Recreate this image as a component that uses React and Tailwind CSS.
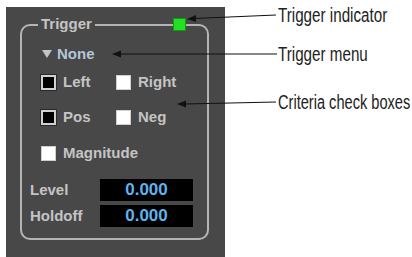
import React from 'react';

const Check = ({ label, on }) => (
    <div className="flex items-center gap-[7px]">
        {on ? (
            <span className="w-[15px] h-[15px] bg-black border-2 border-[#d0d0d0] outline outline-1 outline-[#2a2a2a]" />
        ) : (
            <span className="w-[15px] h-[15px] bg-white border border-[#cfcfcf]" />
        )}
        <span className="text-[15px] font-bold leading-[20px] text-[#c4c4c4]">{label}</span>
    </div>
);

const Field = ({ label, value }) => (
    <div className="flex items-center">
        <span className="w-[70px] text-[15px] font-bold leading-[20px] text-[#c4c4c4]">{label}</span>
        <div className="w-[93px] h-[22px] bg-black flex items-center justify-center text-[17px] font-bold text-[#5fb2ee]">
            {value}
        </div>
    </div>
);

const App = () => {
    return (
        <div className="relative w-[412px] h-[257px] bg-white flex overflow-hidden" style={{ fontFamily: '"Liberation Sans", Arial, sans-serif' }}>
            <div className="shrink-0 ml-[6px] mt-[7px] w-[219px] h-[250px] bg-[#484848] pl-[14px] pt-[17px]">
                <div className="relative w-[189px] h-[216px] border-2 border-[#b4b4b4] rounded-[10px]">
                    {/* legend and indicator sitting on the top border */}
                    <div className="absolute left-[16px] top-[-12px] px-[3px] bg-[#484848] text-[15px] font-bold leading-[20px] text-[#c4c4c4]">
                        Trigger
                    </div>
                    <div className="absolute left-[151px] top-[-8px] w-[13px] h-[13px] bg-[#22e022] border border-[#119911]" />

                    <div className="flex flex-col pl-[19px]">
                        <div className="mt-[18px] flex items-center gap-[5px] pl-[1px]">
                            <svg width="10" height="8" viewBox="0 0 10 8">
                                <polygon points="0,0 10,0 5,8" fill="#c4c4c4" />
                            </svg>
                            <span className="text-[15px] font-bold leading-[20px] text-[#b4c6d6]">None</span>
                        </div>
                        <div className="mt-[8px] flex">
                            <div className="w-[75px]"><Check label="Left" on /></div>
                            <Check label="Right" />
                        </div>
                        <div className="mt-[15px] flex">
                            <div className="w-[75px]"><Check label="Pos" on /></div>
                            <Check label="Neg" />
                        </div>
                        <div className="mt-[16px] flex">
                            <Check label="Magnitude" />
                        </div>
                    </div>
                    <div className="flex flex-col gap-[4px] pl-[8px] mt-[16px]">
                        <Field label="Level" value="0.000" />
                        <Field label="Holdoff" value="0.000" />
                    </div>
                </div>
            </div>

            <div className="ml-[53px] flex flex-col items-start text-[#222] text-[20px] leading-[20px]">
                <span className="mt-[5px] whitespace-nowrap origin-left scale-x-[0.76]">Trigger indicator</span>
                <span className="mt-[19px] whitespace-nowrap origin-left scale-x-[0.76]">Trigger menu</span>
                <span className="mt-[28px] whitespace-nowrap origin-left scale-x-[0.73]">Criteria check boxes</span>
            </div>

            <svg className="absolute inset-0 pointer-events-none" width="412" height="257" viewBox="0 0 412 257">
                <g stroke="#111" strokeWidth="1.2" fill="none">
                    <line x1="194" y1="18.5" x2="276" y2="15" />
                    <line x1="119" y1="54" x2="277" y2="54" />
                    <line x1="184" y1="104" x2="276" y2="102" />
                </g>
                <g fill="#111">
                    <polygon points="187,19 196,15 196,22" />
                    <polygon points="112,54 121,50.5 121,57.5" />
                    <polygon points="177,104 186,100.5 186,107.5" />
                </g>
            </svg>
        </div>
    );
};

export default App;
